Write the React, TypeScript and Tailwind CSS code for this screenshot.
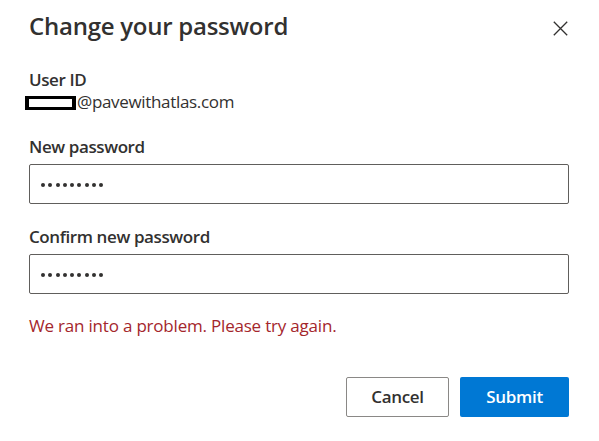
import React from "react";

const font = { fontFamily: '"Open Sans", "Noto Sans", Arial, sans-serif' };

function Dots() {
  return (
    <div className="flex items-center gap-[3.25px]">
      {Array.from({ length: 9 }).map((_, i) => (
        <span key={i} className="block w-[4px] h-[4px] rounded-full bg-[#323130]" />
      ))}
    </div>
  );
}

function Field({ label }: { label: string }) {
  return (
    <div className="flex flex-col">
      <div className="text-[17px] leading-[22px] font-semibold tracking-[-0.4px] text-[#323130]">{label}</div>
      <div className="mt-[6px] h-[40px] w-[540px] rounded-[2px] border border-[#605e5c] flex items-center pl-[11px] pt-[1px]">
        <Dots />
      </div>
    </div>
  );
}

export default function App() {
  return (
    <div className="w-[599px] h-[441px] bg-white relative" style={font}>
      <div className="flex items-start justify-between pl-[29px] pr-[31px] pt-[10px]">
        <h1 className="text-[24px] leading-[32px] font-semibold tracking-[-0.25px] text-[#323130]">Change your password</h1>
        <button className="mt-[11px] w-[15px] h-[15px] flex items-center justify-center" aria-label="Close">
          <svg width="15" height="15" viewBox="0 0 15 15" fill="none">
            <path d="M0.8 0.8 L14.2 14.2 M14.2 0.8 L0.8 14.2" stroke="#323130" strokeWidth="1.3" />
          </svg>
        </button>
      </div>
      <div className="pl-[29px] pt-[27px] flex flex-col">
        <div className="text-[17px] leading-[22px] font-semibold tracking-[-0.4px] text-[#323130]">User ID</div>
        <div className="text-[17px] leading-[22px] tracking-[-0.33px] text-[#323130] flex items-center">
          <div className="shrink-0 w-[51px] h-[14px] bg-black px-[4px] py-[3px] ml-[-4px] mt-[2px]">
            <div className="w-full h-full bg-white" />
          </div>
          <span className="ml-[1px]">@pavewithatlas.com</span>
        </div>
        <div className="mt-[23px]">
          <Field label="New password" />
        </div>
        <div className="mt-[22px]">
          <Field label="Confirm new password" />
        </div>
        <div className="mt-[21px] text-[17px] leading-[22px] tracking-[-0.2px] text-[#a4262c]">
          We ran into a problem. Please try again.
        </div>
      </div>
      <div className="flex justify-end gap-[11px] pr-[30px] mt-[40px]">
        <button className="h-[40px] w-[103px] rounded-[2px] border border-[#8a8886] bg-white text-[17px] font-semibold tracking-[-0.3px] text-[#323130]">
          Cancel
        </button>
        <button className="h-[40px] w-[109px] rounded-[2px] bg-[#0078d4] text-[17px] font-semibold tracking-[-0.3px] text-white">
          Submit
        </button>
      </div>
    </div>
  );
}
